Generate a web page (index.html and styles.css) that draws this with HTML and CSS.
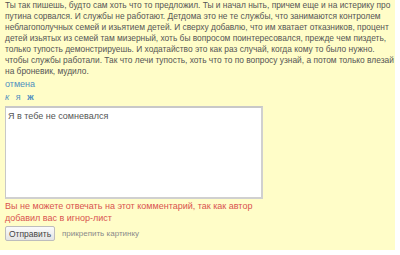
FILE: index.html
```html
<!DOCTYPE html>
<html>
<head>
    <meta charset="UTF-8">
    <title>Ответ на комментарий</title>
    <link rel="stylesheet" href="styles.css">
</head>
<body>
    <div class="reply-box">
        <p class="quote">Ты так пишешь, будто сам хоть что то предложил. Ты и начал ныть, причем еще и на истерику про<br>
        путина сорвался. И службы не работают. Детдома это не те службы, что занимаются контролем<br>
        неблагополучных семей и изьятием детей. И сверху добавлю, что им хватает отказников, процент<br>
        детей изьятых из семей там мизерный, хоть бы вопросом поинтересовался, прежде чем пиздеть,<br>
        только тупость демонстрируешь. И ходатайство это как раз случай, когда кому то было нужно.<br>
        чтобы службы работали. Так что лечи тупость, хоть что то по вопросу узнай, а потом только влезай<br>
        на броневик, мудило.</p>

        <a class="cancel" href="#">отмена</a>

        <div class="format">
            <a href="#" class="f-italic">к</a>
            <a href="#" class="f-under">я</a>
            <a href="#" class="f-bold">ж</a>
        </div>

        <textarea class="answer">Я в тебе не сомневался</textarea>

        <div class="error">Вы не можете отвечать на этот комментарий, так как автор<br>добавил вас в игнор-лист</div>

        <div class="actions">
            <button class="send">Отправить</button>
            <a href="#" class="attach">прикрепить картинку</a>
        </div>
    </div>
</body>
</html>
```

FILE: styles.css
```css
body {
    margin: 0;
    background-color: #ffffff;
    font-family: "Liberation Sans", Arial, sans-serif;
}
.reply-box {
    width: 390px;
    background-color: #fffdc8;
    padding: 0 0 9px 5px;
    font-size: 9px;
    color: #555555;
}
.quote {
    margin: 0;
    font-size: 8.4px;
    line-height: 11px;
    white-space: nowrap;
}
.cancel {
    display: block;
    margin-top: 2px;
    line-height: 11px;
    color: #4f8fc0;
    text-decoration: none;
}
.format {
    margin-top: 2px;
    line-height: 11px;
}
.format a {
    color: #4f8fc0;
    text-decoration: none;
    margin-right: 4px;
}
.f-italic {
    font-style: italic;
}
.f-bold {
    font-weight: bold;
}
.answer {
    display: block;
    box-sizing: border-box;
    width: 258px;
    height: 93px;
    margin: 3px 0 0 0;
    padding: 3px 2px;
    border-style: solid;
    border-width: 2px 2px 2px 1px;
    border-color: #c8c8c8 #d0d0d0 #d0d0d0 #c8c8c8;
    background: #ffffff;
    font-family: "Liberation Sans", Arial, sans-serif;
    font-size: 9px;
    line-height: 11px;
    color: #555555;
    resize: none;
}
.error {
    margin-top: 1px;
    line-height: 12px;
    color: #d9534f;
}
.actions {
    display: flex;
    align-items: center;
    gap: 7px;
    margin-top: 2px;
}
.send {
    font-family: "Liberation Sans", Arial, sans-serif;
    font-size: 8.5px;
    color: #444444;
    background: linear-gradient(#fbfbfb, #e4e4e4);
    border: 1px solid #bdbdbd;
    border-radius: 2px;
    padding: 0;
    width: 50px;
    height: 15px;
    text-align: center;
}
.attach {
    font-size: 8px;
    color: #8a8a8a;
    text-decoration: none;
}
```
